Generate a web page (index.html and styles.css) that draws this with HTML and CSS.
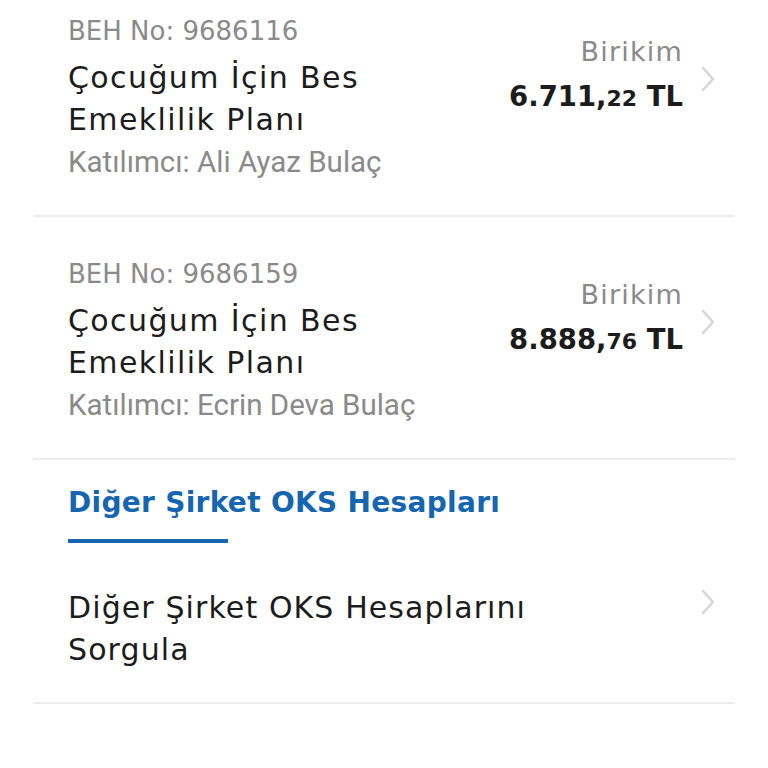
FILE: index.html
```html
<!DOCTYPE html>
<html lang="tr">
<head>
    <meta charset="UTF-8">
    <meta name="viewport" content="width=device-width, initial-scale=1.0">
    <title>BES Hesaplarım</title>
    <link rel="stylesheet" href="styles.css">
</head>
<body>
    <div class="list">

        <!-- BES contracts -->
        <div class="item">
            <div class="info">
                <div class="no">BEH No: 9686116</div>
                <div class="title">Çocuğum İçin Bes<br>Emeklilik Planı</div>
                <div class="owner">Katılımcı: Ali Ayaz Bulaç</div>
            </div>
            <div class="amount">
                <div class="label">Birikim</div>
                <div class="value">6.711,<small>22</small> TL</div>
            </div>
            <svg class="chev" width="14" height="26" viewBox="0 0 14 26"><path d="M2 2 L12 13 L2 24" fill="none" stroke="#d4d4d4" stroke-width="2.4" stroke-linecap="round" stroke-linejoin="round"/></svg>
        </div>

        <div class="item">
            <div class="info">
                <div class="no">BEH No: 9686159</div>
                <div class="title">Çocuğum İçin Bes<br>Emeklilik Planı</div>
                <div class="owner">Katılımcı: Ecrin Deva Bulaç</div>
            </div>
            <div class="amount">
                <div class="label">Birikim</div>
                <div class="value">8.888,<small>76</small> TL</div>
            </div>
            <svg class="chev" width="14" height="26" viewBox="0 0 14 26"><path d="M2 2 L12 13 L2 24" fill="none" stroke="#d4d4d4" stroke-width="2.4" stroke-linecap="round" stroke-linejoin="round"/></svg>
        </div>

        <!-- Other company OKS -->
        <div class="section">
            <h2>Diğer Şirket OKS Hesapları</h2>
            <div class="bar"></div>
        </div>

        <div class="item link">
            <div class="info">
                <div class="title">Diğer Şirket OKS Hesaplarını<br>Sorgula</div>
            </div>
            <svg class="chev" width="14" height="26" viewBox="0 0 14 26"><path d="M2 2 L12 13 L2 24" fill="none" stroke="#d4d4d4" stroke-width="2.4" stroke-linecap="round" stroke-linejoin="round"/></svg>
        </div>

    </div>
</body>
</html>
```

FILE: styles.css
```css
body { margin: 0; background: #fff; font-family: "DejaVu Sans", sans-serif; color: #1c1c1c; }
.list { padding: 0 33px; margin-top: -26px; }
.item { display: flex; align-items: center; padding-left: 35px; border-bottom: 2px solid #ececec; height: 241px; }
.info { flex: 1; padding-top: 7px; }
.no { font-size: 26px; color: #8a8a8a; line-height: 34px; margin-bottom: 9px; }
.title { font-size: 30px; line-height: 42px; letter-spacing: 1.4px; }
.owner { font-size: 29.5px; color: #8a8a8a; font-family: Roboto, sans-serif; line-height: 42px; }
.amount { text-align: right; margin-right: 18px; margin-bottom: 36px; }
.label { font-size: 27px; color: #8a8a8a; line-height: 42px; letter-spacing: 1.2px; }
.value { font-size: 27.5px; font-weight: 700; line-height: 46px; }
.value small { font-size: 22px; }
.chev { margin-right: 20px; margin-bottom: 32px; }
.section { padding: 23px 0 0 35px; }
h2 { margin: 0; font-size: 28px; font-weight: 700; color: #1565b0; line-height: 40px; letter-spacing: 0.3px; }
.bar { width: 160px; height: 4px; background: #1565b0; margin-top: 16px; }
.item.link { height: 146px; padding-top: 13px; }
.item.link .title { letter-spacing: 1.1px; }
.item.link .info { padding-top: 0; }
.item.link .chev { align-self: flex-start; margin: 33px 20px 0 0; }
```
